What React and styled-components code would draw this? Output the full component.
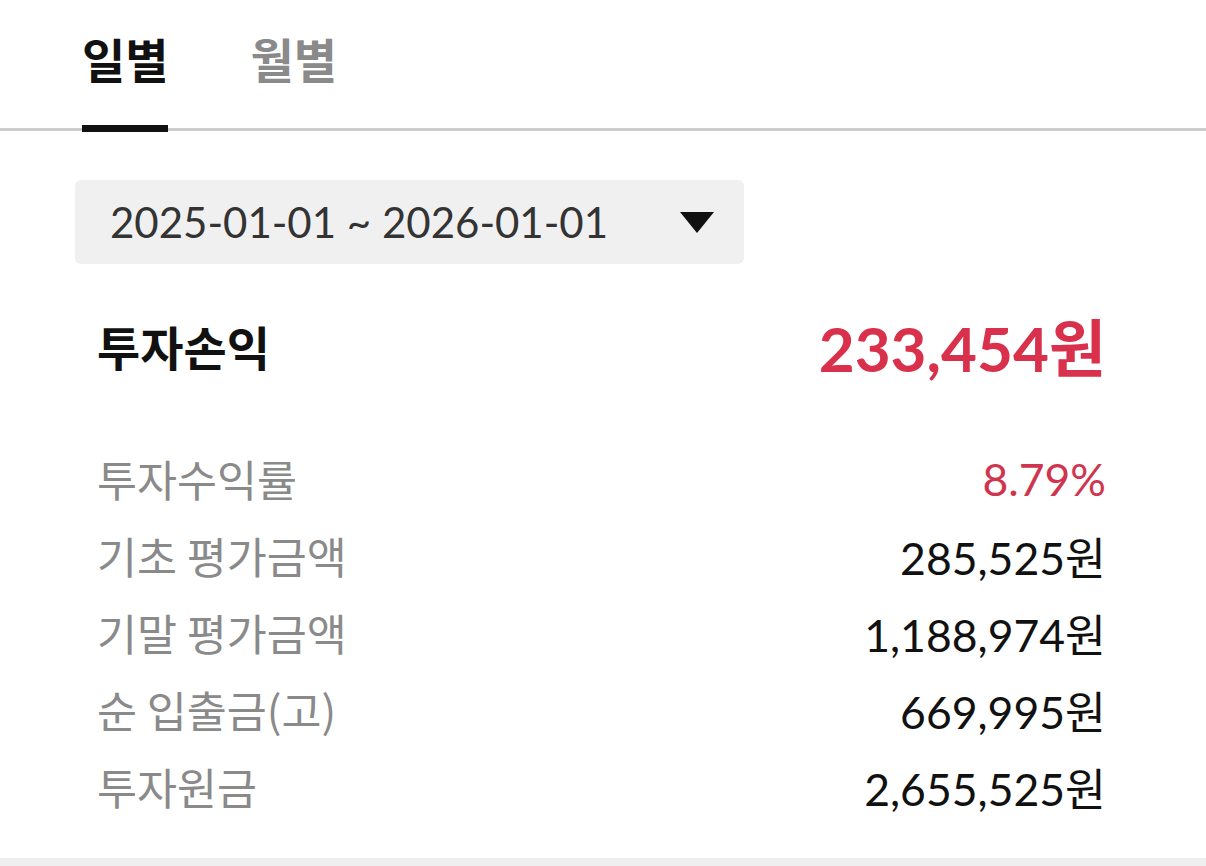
import styled, { createGlobalStyle } from "styled-components";

const GlobalStyle = createGlobalStyle`
	html, body {
		margin: 0;
		padding: 0;
		background: #efefef;
	}
	body {
		font-family: "Lato", "Noto Sans CJK KR", sans-serif;
		color: #111;
	}
`;

const rows = [
	{ label: "투자수익률", value: "8.79%", red: true },
	{ label: "기초 평가금액", value: "285,525원" },
	{ label: "기말 평가금액", value: "1,188,974원" },
	{ label: "순 입출금(고)", value: "669,995원" },
	{ label: "투자원금", value: "2,655,525원" },
];

const App = () => {
	return (
		<>
			<GlobalStyle />
			<Panel>
				<TabBar>
					<Tab active>일별</Tab>
					<Tab>월별</Tab>
				</TabBar>
				<Body>
					<RangeSelect>
						<span>2025-01-01 ~ 2026-01-01</span>
						<Caret />
					</RangeSelect>
					<Headline>
						<HeadLabel>투자손익</HeadLabel>
						<HeadValue>233,454원</HeadValue>
					</Headline>
					<List>
						{rows.map(row => (
							<Row key={row.label}>
								<Label>{row.label}</Label>
								<Value red={row.red}>{row.value}</Value>
							</Row>
						))}
					</List>
				</Body>
			</Panel>
		</>
	);
};

const Panel = styled.div`
	background: #fff;
	height: 858px;
	box-sizing: border-box;
`;

const TabBar = styled.div`
	display: flex;
	gap: 82px;
	padding: 0 82px;
	height: 131px;
	box-sizing: border-box;
	border-bottom: 3px solid #cccccc;
`;

const Tab = styled.div`
	font-family: "Noto Sans CJK KR", sans-serif;
	font-size: 47px;
	font-weight: 700;
	line-height: 47px;
	padding-top: 34px;
	height: 132px;
	box-sizing: border-box;
	color: ${p => (p.active ? "#111" : "#8a8a8a")};
	border-bottom: 7px solid ${p => (p.active ? "#111" : "transparent")};
	margin-bottom: -4px;
`;

const Body = styled.div`
	padding: 49px 100px 0 75px;
`;

const RangeSelect = styled.div`
	width: 669px;
	height: 84px;
	box-sizing: border-box;
	background: #f0f0f0;
	border-radius: 6px;
	display: flex;
	align-items: center;
	justify-content: space-between;
	padding: 0 30px 0 35px;
	font-size: 42px;
	color: #333;
`;

const Caret = styled.div`
	width: 0;
	height: 0;
	border-left: 17px solid transparent;
	border-right: 17px solid transparent;
	border-top: 21px solid #111;
`;

const Headline = styled.div`
	display: flex;
	justify-content: space-between;
	align-items: center;
	height: 80px;
	margin-top: 41px;
	padding-left: 22px;
`;

const HeadLabel = styled.div`
	font-family: "Noto Sans CJK KR", sans-serif;
	font-size: 47px;
	font-weight: 700;
	color: #111;
`;

const HeadValue = styled.div`
	font-size: 62px;
	font-weight: 700;
	color: #d9304c;
`;

const List = styled.div`
	margin-top: 55px;
	padding-left: 22px;
	display: flex;
	flex-direction: column;
`;

const Row = styled.div`
	display: flex;
	justify-content: space-between;
	align-items: center;
	height: 77px;
`;

const Label = styled.div`
	font-family: "Noto Sans CJK KR", sans-serif;
	font-size: 43.5px;
	color: #8a8a8a;
`;

const Value = styled.div`
	font-size: 44.5px;
	color: ${p => (p.red ? "#d0354f" : "#111")};
`;

export default App;
